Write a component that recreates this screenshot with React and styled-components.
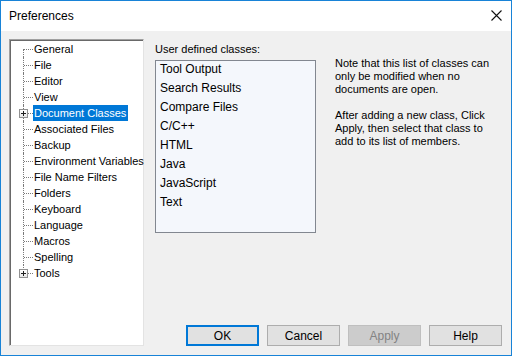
import React from 'react';
import styled, { createGlobalStyle } from 'styled-components';

const GlobalStyle = createGlobalStyle`
  html, body {
    margin: 0;
    padding: 0;
    background: #ffffff;
  }
  body {
    font-family: 'Liberation Sans', Arial, sans-serif;
    font-size: 11px;
    color: #000;
  }
`;

const Window = styled.div`
  width: 512px;
  height: 356px;
  box-sizing: border-box;
  border: 1px solid #1883d7;
  display: flex;
  flex-direction: column;
  background: #f0f0f0;
`;

const TitleBar = styled.div`
  height: 30px;
  flex: none;
  background: #fff;
  display: flex;
  align-items: center;
  justify-content: space-between;
  padding: 0 9px 0 8px;
`;

const Title = styled.div`
  font-size: 12px;
  color: #000;
  margin-top: -1px;
`;

const CloseButton = styled.div`
  width: 12px;
  height: 12px;
  display: flex;
  align-items: center;
  justify-content: center;
  margin-top: -1px;
`;

const Body = styled.div`
  flex: 1;
  display: flex;
  padding: 8px 8px 9px 8px;
  min-height: 0;
`;

const Tree = styled.div`
  width: 132px;
  flex: none;
  background: #fff;
  border-style: solid;
  border-width: 1px;
  border-color: #a0a0a0 #e3e3e3 #e3e3e3 #a0a0a0;
  box-shadow: inset 1px 1px 0 #696969;
  padding: 1px 0 0 1px;
`;

const TreeRow = styled.div`
  display: flex;
  height: 16px;
  align-items: center;
`;

const Connector = styled.span`
  position: relative;
  width: 22px;
  height: 16px;
  flex: none;

  &::before {
    content: '';
    position: absolute;
    left: 12px;
    top: ${p => (p.$first ? '8px' : '0')};
    height: ${p => (p.$first ? '8px' : p.$last ? '9px' : '16px')};
    border-left: 1px dotted #7a7a7a;
  }

  &::after {
    content: '';
    position: absolute;
    left: 13px;
    top: 8px;
    width: 9px;
    border-top: 1px dotted #7a7a7a;
  }
`;

const PlusBox = styled.span`
  position: absolute;
  left: 8px;
  top: 4px;
  width: 7px;
  height: 7px;
  border: 1px solid #919191;
  background: linear-gradient(#ffffff, #e8e8e8);
  z-index: 1;

  &::before {
    content: '';
    position: absolute;
    left: 1px;
    top: 3px;
    width: 5px;
    height: 1px;
    background: #1f1f1f;
  }

  &::after {
    content: '';
    position: absolute;
    left: 3px;
    top: 1px;
    width: 1px;
    height: 5px;
    background: #1f1f1f;
  }
`;

const TreeLabel = styled.span`
  line-height: 16px;
  padding: 0 2px 0 1px;
  white-space: nowrap;
  background: ${p => (p.$selected ? '#0078d7' : 'transparent')};
  color: ${p => (p.$selected ? '#fff' : '#000')};
`;

const Main = styled.div`
  flex: 1;
  display: flex;
  flex-direction: column;
  margin-left: 11px;
`;

const Top = styled.div`
  display: flex;
  flex: 1;
`;

const ListColumn = styled.div`
  width: 161px;
  flex: none;
  display: flex;
  flex-direction: column;
`;

const FieldLabel = styled.div`
  line-height: 16px;
  padding-top: 2px;
  margin-bottom: 3px;
`;

const ListBox = styled.div`
  height: 173px;
  box-sizing: border-box;
  border: 1px solid #828790;
  background: #f4f7fc;
`;

const ListItem = styled.div`
  height: 19px;
  line-height: 17px;
  padding-left: 4px;
  font-size: 12px;
  color: #000;
`;

const Note = styled.div`
  margin-left: 19px;
  padding-top: 18px;
  line-height: 13px;
  width: 158px;

  p {
    margin: 0 0 13px 0;
  }
`;

const ButtonRow = styled.div`
  display: flex;
  justify-content: flex-end;
  gap: 8px;
  padding-right: 1px;
`;

const Button = styled.div`
  width: 73px;
  height: 21px;
  box-sizing: border-box;
  display: flex;
  align-items: center;
  justify-content: center;
  font-size: 12px;
  background: ${p => (p.$disabled ? '#cccccc' : '#e1e1e1')};
  color: ${p => (p.$disabled ? '#838383' : '#000')};
  border: ${p =>
    p.$default ? '2px solid #0078d7' : p.$disabled ? '1px solid #bfbfbf' : '1px solid #adadad'};
`;

const treeItems = [
  'General',
  'File',
  'Editor',
  'View',
  'Document Classes',
  'Associated Files',
  'Backup',
  'Environment Variables',
  'File Name Filters',
  'Folders',
  'Keyboard',
  'Language',
  'Macros',
  'Spelling',
  'Tools',
];

const expandable = ['Document Classes', 'Tools'];

const classes = [
  'Tool Output',
  'Search Results',
  'Compare Files',
  'C/C++',
  'HTML',
  'Java',
  'JavaScript',
  'Text',
];

export default function App() {
  return (
    <>
      <GlobalStyle />
      <Window>
        <TitleBar>
          <Title>Preferences</Title>
          <CloseButton>
            <svg width="11" height="11" viewBox="0 0 11 11">
              <path d="M0.5 0.5 L10.5 10.5 M10.5 0.5 L0.5 10.5" stroke="#111" strokeWidth="1.1" fill="none" />
            </svg>
          </CloseButton>
        </TitleBar>
        <Body>
          <Tree>
            {treeItems.map((item, i) => (
              <TreeRow key={item}>
                <Connector $first={i === 0} $last={i === treeItems.length - 1}>
                  {expandable.includes(item) && <PlusBox />}
                </Connector>
                <TreeLabel $selected={item === 'Document Classes'}>{item}</TreeLabel>
              </TreeRow>
            ))}
          </Tree>
          <Main>
            <Top>
              <ListColumn>
                <FieldLabel>User defined classes:</FieldLabel>
                <ListBox>
                  {classes.map(c => (
                    <ListItem key={c}>{c}</ListItem>
                  ))}
                </ListBox>
              </ListColumn>
              <Note>
                <p>Note that this list of classes can only be modified when no documents are open.</p>
                <p>After adding a new class, Click Apply, then select that class to add to its list of members.</p>
              </Note>
            </Top>
            <ButtonRow>
              <Button $default>OK</Button>
              <Button>Cancel</Button>
              <Button $disabled>Apply</Button>
              <Button>Help</Button>
            </ButtonRow>
          </Main>
        </Body>
      </Window>
    </>
  );
}
